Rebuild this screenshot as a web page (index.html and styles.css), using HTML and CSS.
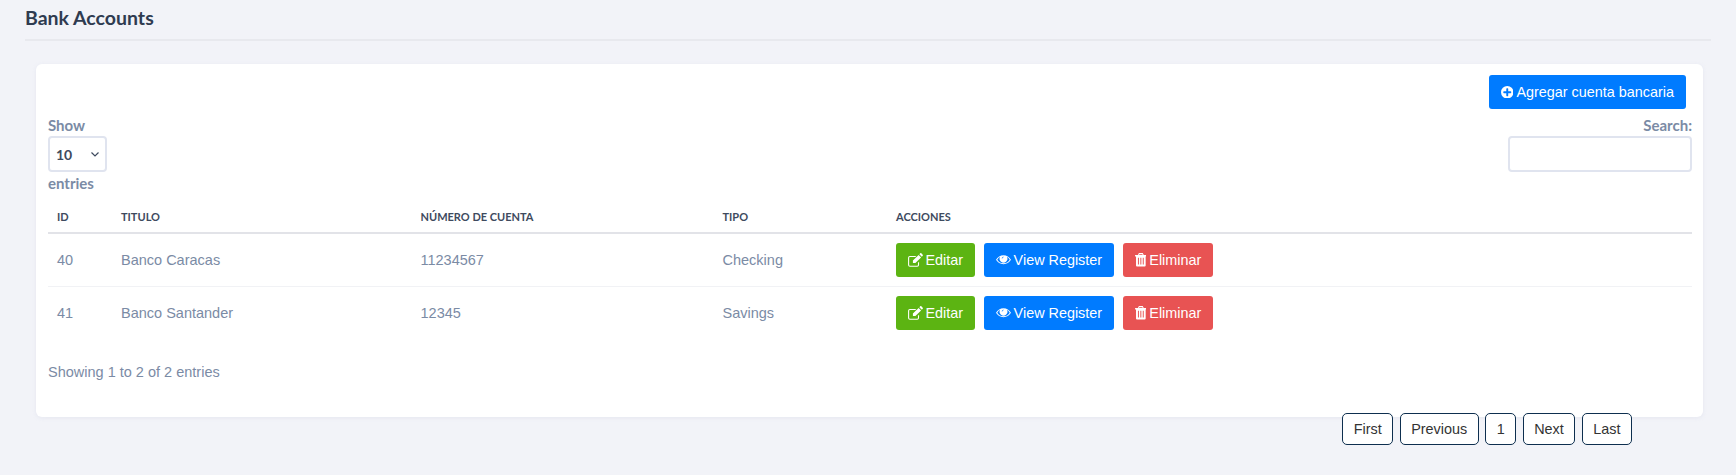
FILE: index.html
```html
<!DOCTYPE html>
<html lang="es">
<head>
<meta charset="utf-8">
<title>Bank Accounts</title>
<link rel="stylesheet" href="styles.css">
</head>
<body>
<header class="page-head">
  <h1 class="page-title">Bank Accounts</h1>
</header>
<main class="card">
  <div class="card-top">
    <a class="btn btn-blue" href="#"><svg class="ico ico-plus" viewBox="1.5 1.500 13 13"><path fill-rule="evenodd" d="M8 1.500a6.500 6.500 0 1 1 0 13 6.500 6.500 0 0 1 0-13zM7 4.500v2.500H4.500a.6.6 0 0 0-.6.6v.9c0 .3.3.5.6.5H7v2.500c0 .3.3.6.6.6h.9c.3 0 .5-.3.5-.6V9h2.500c.3 0 .6-.2.6-.5v-.9a.6.6 0 0 0-.6-.6H9V4.500c0-.3-.2-.6-.5-.6h-.9c-.3 0-.6.3-.6.6z"/></svg>Agregar cuenta bancaria</a>
  </div>
  <div class="tools">
    <label class="field">Show
      <span class="select-wrap">
        <select class="entries-select"><option>10</option><option>25</option><option>50</option></select>
        <svg class="chevron" viewBox="0 0 8 5"><path d="M.5.5 4 4 7.500.5"/></svg>
      </span>
      entries</label>
    <label class="field field-right">Search:
      <input class="search" type="search">
    </label>
  </div>
  <table class="grid">
    <colgroup><col class="c1"><col class="c2"><col class="c3"><col class="c4"><col></colgroup>
    <thead>
      <tr><th>ID</th><th>Titulo</th><th>Número de cuenta</th><th>Tipo</th><th>Acciones</th></tr>
    </thead>
    <tbody>
      <tr>
        <td>40</td><td>Banco Caracas</td><td>11234567</td><td>Checking</td>
        <td><div class="actions">
          <a class="btn btn-green" href="#"><svg class="ico ico-edit" viewBox="1.500 1.200 13.800 13"><path d="M11.700 9.300v3a1.700 1.700 0 0 1-1.700 1.700H3.200a1.700 1.700 0 0 1-1.700-1.700V5.600a1.700 1.700 0 0 1 1.700-1.700h6l-1 1H3.200a.7.7 0 0 0-.7.7v6.700c0 .4.3.7.7.7H10c.4 0 .7-.3.7-.7v-2zM6 8.200 11.300 3l2.300 2.300L8.300 10.500H6zM12 2.300l.8-.8c.3-.3.7-.3 1 0l1.300 1.300c.3.3.3.7 0 1l-.8.800z"/></svg>Editar</a>
          <a class="btn btn-blue" href="#"><svg class="ico ico-eye" viewBox="0.500 3 17 10"><path fill-rule="evenodd" d="M9 3c3.600 0 6.700 2.200 8.500 5-1.800 2.800-4.900 5-8.500 5S2.300 10.800.5 8C2.300 5.200 5.400 3 9 3zM5.200 4.600A8.800 8.800 0 0 0 1.900 8 8.300 8.300 0 0 0 9 12a8.300 8.300 0 0 0 7.100-4 8.800 8.800 0 0 0-3.300-3.400 4.400 4.400 0 1 1-7.600 0zM9 4.500a1.800 1.800 0 0 0-2 1.700c0 .2.200.4.400.4s.4-.2.400-.4c0-.6.600-1 1.200-1 .2 0 .4-.2.400-.4s-.2-.3-.4-.3z"/></svg>View Register</a>
          <a class="btn btn-red" href="#"><svg class="ico ico-trash" viewBox="1 1 12 14"><path fill-rule="evenodd" d="M5 1h4l1 2h3v1.500h-1V14a1 1 0 0 1-1 1H3a1 1 0 0 1-1-1V4.500H1V3h3zM5.500 2.200 5.100 3h3.800l-.4-.8zM4 6v7h1V6zM6.500 6v7h1V6zM9 6v7h1V6z"/></svg>Eliminar</a>
        </div></td>
      </tr>
      <tr>
        <td>41</td><td>Banco Santander</td><td>12345</td><td>Savings</td>
        <td><div class="actions">
          <a class="btn btn-green" href="#"><svg class="ico ico-edit" viewBox="1.500 1.200 13.800 13"><path d="M11.700 9.300v3a1.700 1.700 0 0 1-1.700 1.700H3.200a1.700 1.700 0 0 1-1.700-1.700V5.600a1.700 1.700 0 0 1 1.700-1.700h6l-1 1H3.200a.7.7 0 0 0-.7.7v6.700c0 .4.3.7.7.7H10c.4 0 .7-.3.7-.7v-2zM6 8.200 11.300 3l2.300 2.300L8.300 10.500H6zM12 2.300l.8-.8c.3-.3.7-.3 1 0l1.300 1.300c.3.3.3.7 0 1l-.8.800z"/></svg>Editar</a>
          <a class="btn btn-blue" href="#"><svg class="ico ico-eye" viewBox="0.500 3 17 10"><path fill-rule="evenodd" d="M9 3c3.600 0 6.700 2.200 8.500 5-1.800 2.800-4.900 5-8.500 5S2.300 10.800.5 8C2.300 5.200 5.400 3 9 3zM5.200 4.600A8.800 8.800 0 0 0 1.900 8 8.300 8.300 0 0 0 9 12a8.300 8.300 0 0 0 7.100-4 8.800 8.800 0 0 0-3.300-3.400 4.400 4.400 0 1 1-7.600 0zM9 4.500a1.800 1.800 0 0 0-2 1.700c0 .2.200.4.400.4s.4-.2.400-.4c0-.6.600-1 1.200-1 .2 0 .4-.2.400-.4s-.2-.3-.4-.3z"/></svg>View Register</a>
          <a class="btn btn-red" href="#"><svg class="ico ico-trash" viewBox="1 1 12 14"><path fill-rule="evenodd" d="M5 1h4l1 2h3v1.500h-1V14a1 1 0 0 1-1 1H3a1 1 0 0 1-1-1V4.500H1V3h3zM5.500 2.200 5.100 3h3.800l-.4-.8zM4 6v7h1V6zM6.500 6v7h1V6zM9 6v7h1V6z"/></svg>Eliminar</a>
        </div></td>
      </tr>
    </tbody>
  </table>
  <p class="info">Showing 1 to 2 of 2 entries</p>
  <nav class="pager">
    <a class="page" href="#">First</a>
    <a class="page" href="#">Previous</a>
    <a class="page" href="#">1</a>
    <a class="page" href="#">Next</a>
    <a class="page" href="#">Last</a>
  </nav>
</main>
</body>
</html>
```
FILE: styles.css
```css
* { box-sizing: border-box; }
html, body { margin: 0; padding: 0; }
body {
  background: #f2f3f8;
  font-family: "Liberation Sans", Arial, sans-serif;
  font-size: 14.5px;
  color: #7b8ba5;
  height: 475px;
  overflow: hidden;
}
.page-head {
  margin: 0 25px;
  height: 41px;
  border-bottom: 2px solid #e8e9ee;
}
.page-title {
  margin: 0;
  padding-top: 6px;
  font: 700 19.5px/24px "Lato", sans-serif;
  color: #2f3b50;
}
.card {
  margin: 23px 33px 0 36px;
  height: 353px;
  padding: 11px 11px 0 12px;
  background: #fff;
  border-radius: 6px;
  box-shadow: 0 1px 4px rgba(180, 185, 210, .18);
}
.card-top {
  display: flex;
  justify-content: flex-end;
  padding-right: 6px;
}
.btn {
  display: inline-flex;
  align-items: center;
  gap: 3px;
  height: 34px;
  padding: 0 12px;
  border-radius: 3px;
  color: #fff;
  text-decoration: none;
  white-space: nowrap;
  font-size: 14.4px;
}
.actions .btn { padding: 0 11.5px; }
.btn-blue { background: #007bff; }
.btn-green { background: #5cb412; }
.btn-red { background: #e85353; }
.ico { fill: #fff; flex: none; }
.ico-plus { width: 12.5px; height: 12.5px; }
.ico-edit { width: 15px; height: 14px; }
.ico-eye { width: 15px; height: 9.500px; }
.ico-trash { width: 11.700px; height: 13.500px; }
.tools {
  display: flex;
  justify-content: space-between;
  margin-top: 5px;
}
.field {
  display: flex;
  flex-direction: column;
  align-items: flex-start;
  font: 700 15px/22px "Lato", sans-serif;
  color: #7b8ba5;
}
.field-right { align-items: flex-end; }
.select-wrap {
  position: relative;
  display: block;
  width: 59px;
  height: 36px;
}
.entries-select {
  appearance: none;
  display: block;
  width: 59px;
  height: 36px;
  padding: 0 0 0 6px;
  border: 2px solid #e0e4ef;
  border-radius: 4px;
  background: #fff;
  color: #3e4a5e;
  font: 700 14px "Lato", sans-serif;
  outline: none;
}
.chevron {
  position: absolute;
  right: 8px;
  top: 16px;
  width: 8px;
  height: 5px;
  fill: none;
  stroke: #3e4a5e;
  stroke-width: 1.200;
  pointer-events: none;
}
.search {
  display: block;
  width: 184px;
  height: 36px;
  border: 2px solid #e0e4ef;
  border-radius: 4px;
  background: #fff;
  outline: none;
}
.grid {
  width: 100%;
  border-collapse: collapse;
  table-layout: fixed;
}
.c1 { width: 64px; }
.c2 { width: 299.500px; }
.c3 { width: 302px; }
.c4 { width: 173.500px; }
.grid th {
  height: 39px;
  padding: 0 9px 9px;
  vertical-align: bottom;
  text-align: left;
  font: 700 11px "Lato", sans-serif;
  text-transform: uppercase;
  color: #3e4a5e;
  border-bottom: 2px solid #e2e3e8;
}
.grid td {
  padding: 9px;
  border-bottom: 1px solid #f1f2f5;
}
.grid tbody tr:last-child td { border-bottom: 0; }
.actions { display: flex; gap: 9.500px; }
.info {
  margin: 24px 0 0;
  line-height: 18px;
}
.pager {
  display: flex;
  justify-content: flex-end;
  gap: 6.500px;
  margin-top: 32px;
  padding-right: 60px;
}
.page {
  display: flex;
  align-items: center;
  height: 32px;
  padding: 0 10.500px;
  border: 1px solid #0e2f4f;
  border-radius: 5px;
  background: #fff;
  color: #333;
  text-decoration: none;
  font-size: 14.4px;
}
```
